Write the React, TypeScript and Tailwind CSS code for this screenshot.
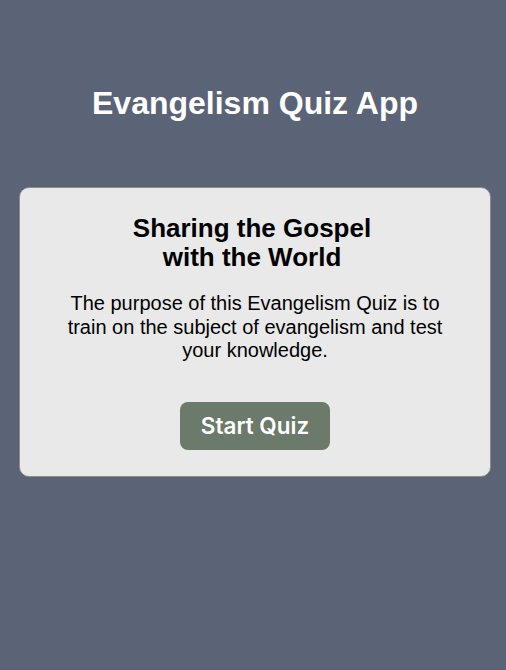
export default function App() {
  return (
    <div className="min-h-[670px] bg-[#5b6477] pt-[85px] font-['Liberation_Sans',Arial,sans-serif]">
      <h1 className="pl-[4px] text-center text-[32px] font-bold leading-[36px] text-white">Evangelism Quiz App</h1>

      <div className="ml-[19px] mt-[66px] w-[472px] rounded-[10px] border border-[#8c8c8c] bg-[#e9e9e9] px-[45px] pb-[26px] pt-[26px] text-center text-black">
        <h2 className="pr-[6px] text-[26px] font-bold leading-[29px]">
          Sharing the Gospel
          <br />
          with the World
        </h2>
        <p className="mt-[20px] text-[20px] leading-[23.5px]">
          The purpose of this Evangelism Quiz is to train on the subject of evangelism and test your knowledge.
        </p>
        <button className="mt-[39px] h-[48px] w-[150px] rounded-[8px] bg-[#6b7a6a] font-['Inter',sans-serif] text-[22.5px] font-semibold text-white">
          Start Quiz
        </button>
      </div>
    </div>
  )
}
